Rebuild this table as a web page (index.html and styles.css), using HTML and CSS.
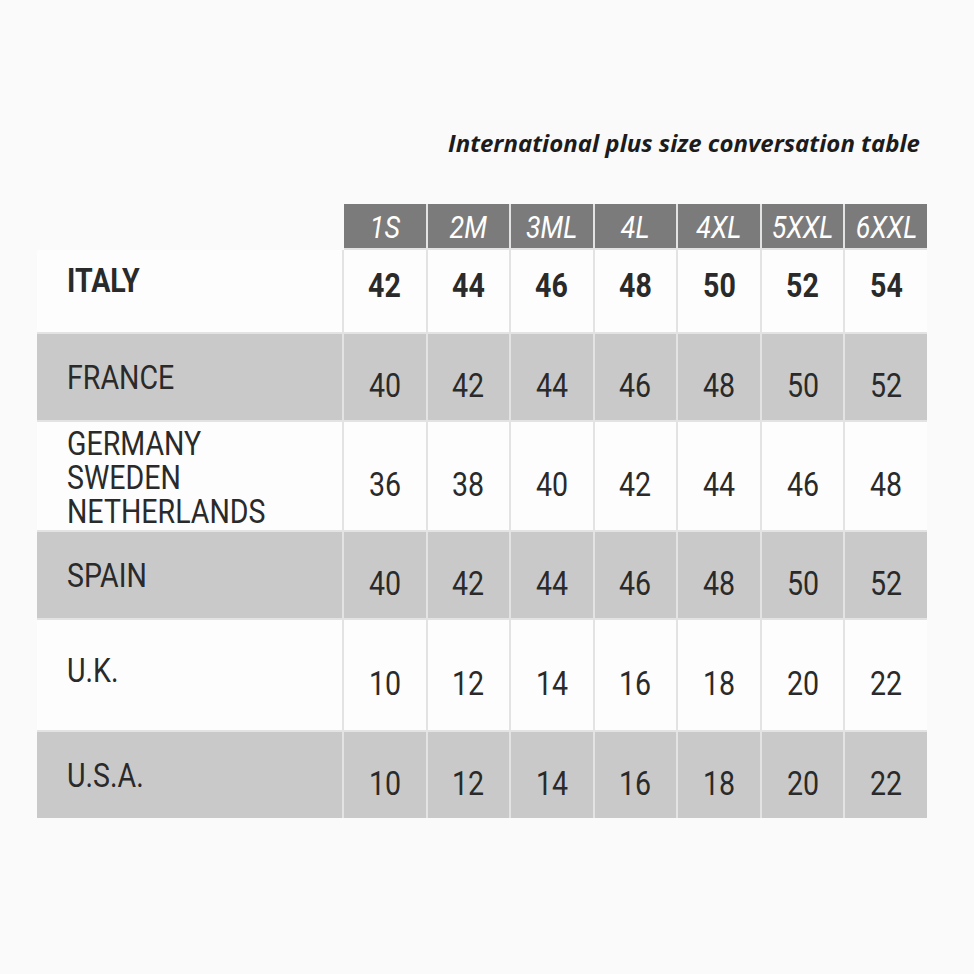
FILE: index.html
```html
<!DOCTYPE html>
<html lang="en">
<head>
<meta charset="utf-8">
<title>International plus size conversation table</title>
<link rel="stylesheet" href="styles.css">
</head>
<body>
<main class="page">
  <h1 class="title">International plus size conversation table</h1>
  <div class="chart">
    <div class="corner"></div>
    <div class="size"><span class="t">1S</span></div>
    <div class="size"><span class="t">2M</span></div>
    <div class="size"><span class="t">3ML</span></div>
    <div class="size"><span class="t">4L</span></div>
    <div class="size"><span class="t">4XL</span></div>
    <div class="size"><span class="t">5XXL</span></div>
    <div class="size"><span class="t">6XXL</span></div>

    <div class="label light row-italy strong"><span class="t">ITALY</span></div>
    <div class="num light row-italy strong"><span class="t">42</span></div>
    <div class="num light row-italy strong"><span class="t">44</span></div>
    <div class="num light row-italy strong"><span class="t">46</span></div>
    <div class="num light row-italy strong"><span class="t">48</span></div>
    <div class="num light row-italy strong"><span class="t">50</span></div>
    <div class="num light row-italy strong"><span class="t">52</span></div>
    <div class="num light row-italy strong"><span class="t">54</span></div>

    <div class="label shade"><span class="t">FRANCE</span></div>
    <div class="num shade"><span class="t">40</span></div>
    <div class="num shade"><span class="t">42</span></div>
    <div class="num shade"><span class="t">44</span></div>
    <div class="num shade"><span class="t">46</span></div>
    <div class="num shade"><span class="t">48</span></div>
    <div class="num shade"><span class="t">50</span></div>
    <div class="num shade"><span class="t">52</span></div>

    <div class="label light multi"><span class="t">GERMANY<br>SWEDEN<br>NETHERLANDS</span></div>
    <div class="num light"><span class="t">36</span></div>
    <div class="num light"><span class="t">38</span></div>
    <div class="num light"><span class="t">40</span></div>
    <div class="num light"><span class="t">42</span></div>
    <div class="num light"><span class="t">44</span></div>
    <div class="num light"><span class="t">46</span></div>
    <div class="num light"><span class="t">48</span></div>

    <div class="label shade"><span class="t">SPAIN</span></div>
    <div class="num shade"><span class="t">40</span></div>
    <div class="num shade"><span class="t">42</span></div>
    <div class="num shade"><span class="t">44</span></div>
    <div class="num shade"><span class="t">46</span></div>
    <div class="num shade"><span class="t">48</span></div>
    <div class="num shade"><span class="t">50</span></div>
    <div class="num shade"><span class="t">52</span></div>

    <div class="label light up"><span class="t">U.K.</span></div>
    <div class="num light"><span class="t">10</span></div>
    <div class="num light"><span class="t">12</span></div>
    <div class="num light"><span class="t">14</span></div>
    <div class="num light"><span class="t">16</span></div>
    <div class="num light"><span class="t">18</span></div>
    <div class="num light"><span class="t">20</span></div>
    <div class="num light"><span class="t">22</span></div>

    <div class="label shade"><span class="t">U.S.A.</span></div>
    <div class="num shade"><span class="t">10</span></div>
    <div class="num shade"><span class="t">12</span></div>
    <div class="num shade"><span class="t">14</span></div>
    <div class="num shade"><span class="t">16</span></div>
    <div class="num shade"><span class="t">18</span></div>
    <div class="num shade"><span class="t">20</span></div>
    <div class="num shade"><span class="t">22</span></div>
  </div>
</main>
</body>
</html>
```

FILE: styles.css
```css
* { box-sizing: border-box; }

html, body {
  margin: 0;
  padding: 0;
  background: #fafafa;
}

.page {
  width: 974px;
  height: 974px;
  padding: 126px 47px 0 37px;
}

.title {
  margin: 0 0 44px 0;
  padding-right: 7px;
  text-align: right;
  font-family: "Open Sans", sans-serif;
  font-style: italic;
  font-weight: 700;
  font-size: 24px;
  line-height: 34px;
  color: #1c1c1c;
}

.chart {
  display: grid;
  grid-template-columns: 305px repeat(7, 1fr);
  grid-template-rows: 44px 82px 86px 108px 86px 110px 86px;
  gap: 2px;
  background: #e3e3e3;
  font-family: "Roboto", sans-serif;
  color: #2a2a2a;
}

.corner {
  background: #fafafa;
  margin: 0 -2px -2px 0;
}

.t {
  display: inline-block;
  transform: scaleX(0.84);
  white-space: nowrap;
}

.size {
  background: #7b7b7b;
  color: #ffffff;
  font-style: italic;
  font-weight: 400;
  font-size: 32px;
  display: flex;
  align-items: center;
  justify-content: center;
  padding-top: 2px;
}

.light { background: #fdfdfd; }
.shade { background: #c9c9c9; }

.label {
  display: flex;
  align-items: center;
  padding-left: 30px;
  font-size: 34px;
  line-height: 34px;
}

.label .t { transform-origin: left center; }

.num {
  display: flex;
  align-items: center;
  justify-content: center;
  font-size: 34px;
  padding-top: 16px;
}

.row-italy.label { padding-bottom: 22px; }
.row-italy.num { padding-top: 0; padding-bottom: 12px; }
.strong { font-weight: 700; }

.label.up { padding-bottom: 10px; }
.label.multi { padding-top: 2px; }
```
